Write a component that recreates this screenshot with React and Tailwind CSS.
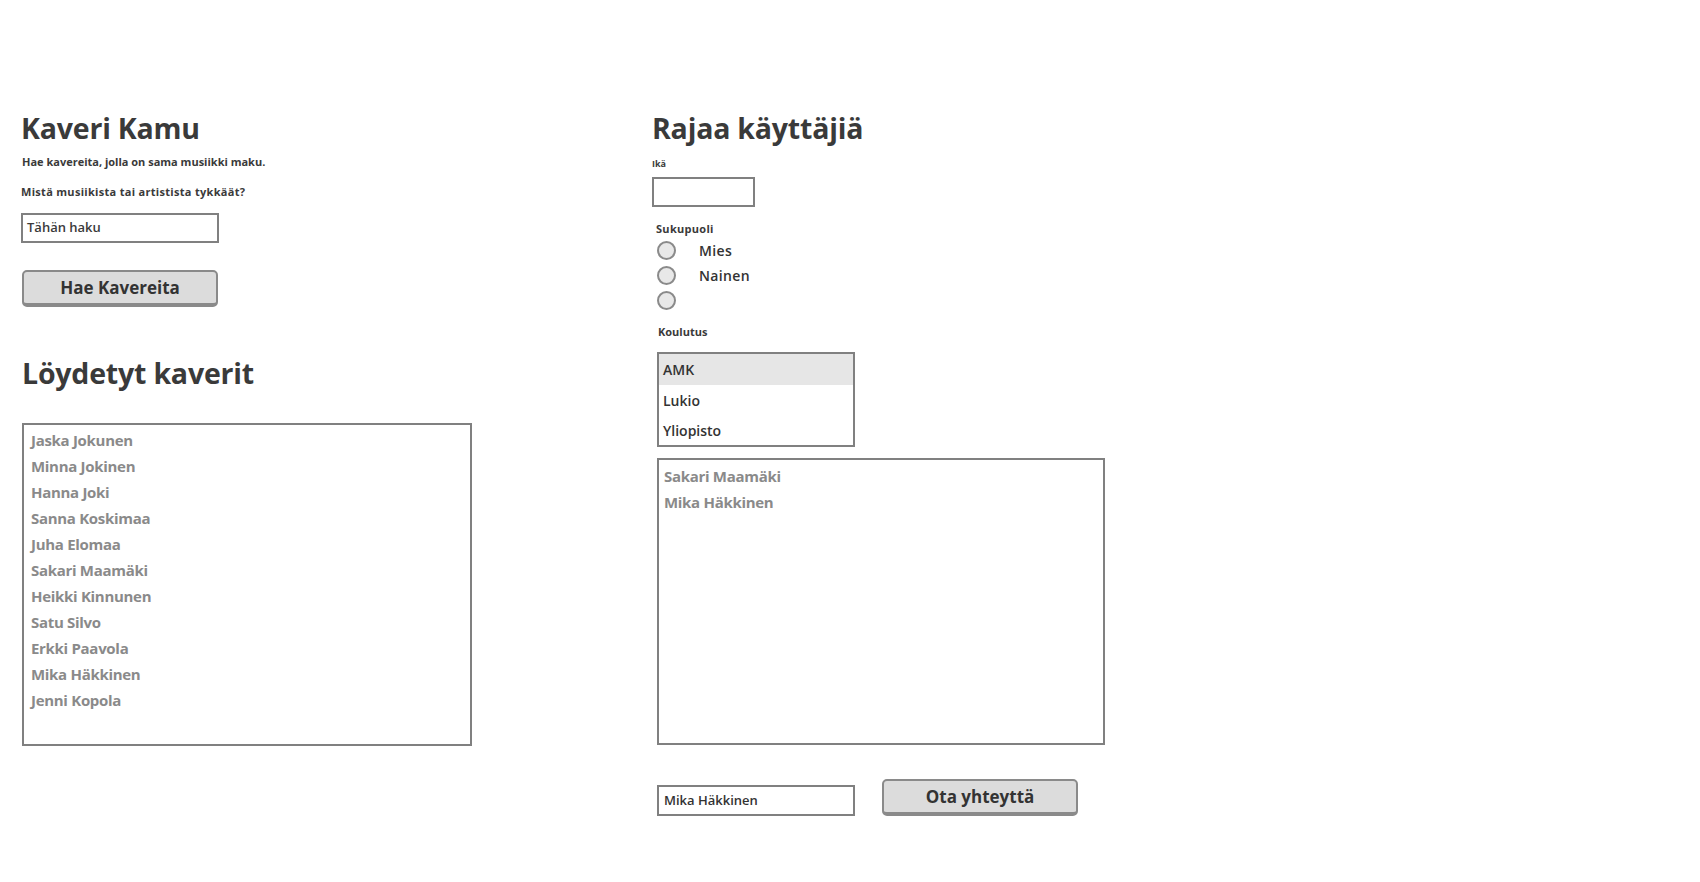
import React from "react";

const friends = [
  "Jaska Jokunen",
  "Minna Jokinen",
  "Hanna Joki",
  "Sanna Koskimaa",
  "Juha Elomaa",
  "Sakari Maamäki",
  "Heikki Kinnunen",
  "Satu Silvo",
  "Erkki Paavola",
  "Mika Häkkinen",
  "Jenni Kopola",
];

const filtered = ["Sakari Maamäki", "Mika Häkkinen"];

function Radio({ label }) {
  return (
    <div className="flex h-[25px] items-center">
      <span className="ml-[5px] h-[19px] w-[19px] rounded-full border-2 border-[#8a8a8a] bg-[#e8e8e8]" />
      <span className="ml-[23px] text-[14px] font-semibold tracking-wide text-[#333]">{label}</span>
    </div>
  );
}

export default function App() {
  return (
    <div className="min-h-[882px] w-[1700px] bg-white font-['Open_Sans',sans-serif] text-[#3a3a3a]">
      <div className="flex pl-[21px] pt-[111px]">
        {/* left column */}
        <div className="w-[631px]">
          <h1 className="text-[28.5px] font-bold leading-[34px] tracking-[-0.2px]">Kaveri Kamu</h1>
          <p className="mt-[9px] pl-[1px] text-[11px] font-bold leading-[16px]">
            Hae kavereita, jolla on sama musiikki maku.
          </p>
          <p className="mt-[14px] text-[11px] font-bold leading-[16px] tracking-[0.3px]">
            Mistä musiikista tai artistista tykkäät?
          </p>
          <div className="mt-[13px] flex h-[30px] w-[198px] items-center border-2 border-[#808080] px-[4px] text-[13px] font-semibold">
            Tähän haku
          </div>
          <button className="ml-[1px] mt-[27px] flex h-[37px] w-[196px] items-center justify-center rounded-[5px] border-2 border-b-[4px] border-[#8a8a8a] bg-[#dcdcdc] text-[17px] font-bold text-[#333]">
            Hae Kavereita
          </button>
          <h2 className="ml-[1px] mt-[49px] text-[28.5px] font-bold leading-[34px] tracking-[-0.2px]">Löydetyt kaverit</h2>
          <div className="ml-[1px] mt-[33px] h-[323px] w-[450px] border-2 border-[#808080] pl-[7px] pt-[2px]">
            {friends.map((n) => (
              <div key={n} className="h-[26px] text-[15px] font-bold leading-[26px] tracking-[-0.3px] text-[#8a8a8a]">
                {n}
              </div>
            ))}
          </div>
        </div>

        {/* right column */}
        <div className="w-[460px]">
          <h1 className="text-[28.5px] font-bold leading-[34px] tracking-[-0.2px]">Rajaa käyttäjiä</h1>
          <p className="mt-[12px] text-[9px] font-bold leading-[14px]">Ikä</p>
          <div className="mt-[6px] h-[30px] w-[103px] border-2 border-[#808080]" />
          <p className="ml-[4px] mt-[14px] text-[11px] font-bold leading-[16px] tracking-[0.3px]">Sukupuoli</p>
          <div className="mt-[1px] flex flex-col">
            <Radio label="Mies" />
            <Radio label="Nainen" />
            <Radio label="" />
          </div>
          <p className="ml-[6px] mt-[11px] text-[11px] font-bold leading-[16px]">Koulutus</p>
          <div className="ml-[5px] mt-[12px] w-[198px] border-2 border-[#808080] text-[14px] font-semibold text-[#333]">
            <div className="flex h-[31px] items-center bg-[#e6e6e6] px-[4px]">AMK</div>
            <div className="flex h-[30px] items-center px-[4px]">Lukio</div>
            <div className="flex h-[30px] items-center px-[4px]">Yliopisto</div>
          </div>
          <div className="ml-[5px] mt-[11px] h-[287px] w-[448px] border-2 border-[#808080] pl-[5px] pt-[3px]">
            {filtered.map((n) => (
              <div key={n} className="h-[26px] text-[15px] font-bold leading-[26px] tracking-[-0.3px] text-[#8a8a8a]">
                {n}
              </div>
            ))}
          </div>
          <div className="ml-[5px] mt-[37px] flex items-center">
            <div className="flex h-[31px] w-[198px] items-center border-2 border-[#808080] px-[5px] text-[13px] font-semibold text-[#333]">
              Mika Häkkinen
            </div>
            <button className="ml-[27px] flex h-[37px] w-[196px] -translate-y-[3px] items-center justify-center rounded-[5px] border-2 border-b-[4px] border-[#8a8a8a] bg-[#dcdcdc] text-[17px] font-bold text-[#333]">
              Ota yhteyttä
            </button>
          </div>
        </div>
      </div>
    </div>
  );
}
